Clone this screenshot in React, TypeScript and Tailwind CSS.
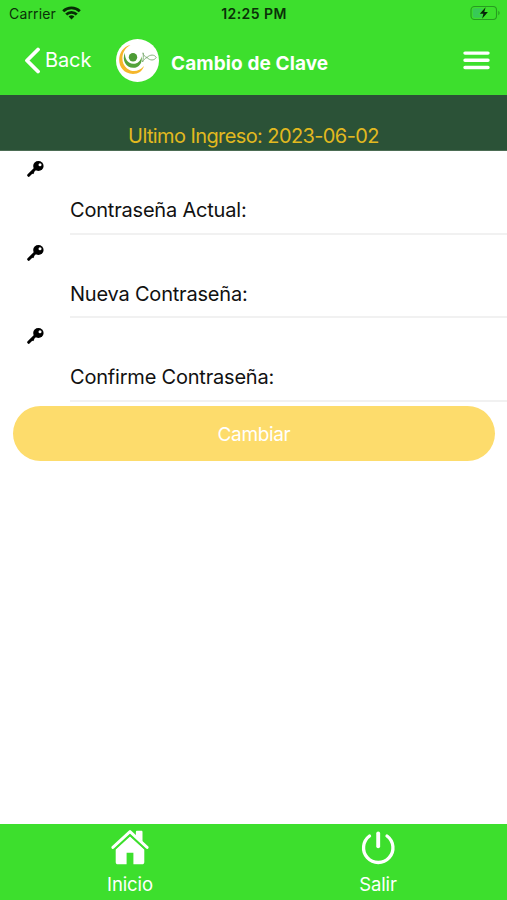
const fields = [
  { id: 'actual', label: 'Contraseña Actual:' },
  { id: 'nueva', label: 'Nueva Contraseña:' },
  { id: 'confirme', label: 'Confirme Contraseña:' },
];

export default function App() {
  return (
    <div className="flex h-[900px] w-[507px] flex-col overflow-hidden bg-white font-['Inter',sans-serif]">
      <header className="h-[95px] shrink-0 bg-[#3ddf2d]">
        <StatusBar />
        <NavBar />
      </header>

      <div className="flex h-[56px] shrink-0 items-end justify-center border-b border-[#4b6c54] bg-[#2b5237] pb-[2px]">
        <p className="text-[20px] leading-6 tracking-[-0.6px] text-[#e2b91f]">Ultimo Ingreso: 2023-06-02</p>
      </div>

      <main className="flex-1 pt-[0.4px]">
        {fields.map((field) => (
          <PasswordField key={field.id} label={field.label} />
        ))}
        <button className="mx-[13px] mt-[4.6px] flex h-[55px] w-[482px] items-center justify-center rounded-full bg-[#fddc6c] pt-[2px] text-[19px] tracking-[-0.35px] text-white">
          Cambiar
        </button>
      </main>

      <footer className="flex h-[76px] shrink-0 bg-[#3ddf2d] pl-[6px] text-white">
        <TabItem label="Inicio">
          <HomeIcon />
        </TabItem>
        <TabItem label="Salir">
          <PowerIcon />
        </TabItem>
      </footer>
    </div>
  );
}

function StatusBar() {
  return (
    <div className="grid h-[27px] grid-cols-3 items-center pr-[6px] pl-[9px] text-[#0a3008]">
      <div className="flex items-center gap-[6px]">
        <span className="text-[14px] tracking-[0.15px]">Carrier</span>
        <svg className="mb-[2px] h-[14px] w-[19px]" viewBox="0 0 19 14" fill="none" stroke="#072c05" strokeWidth="2.8">
          <path d="M1.2 5.2a12 12 0 0 1 16.6 0" />
          <path d="M4.2 8.6a7.6 7.6 0 0 1 10.6 0" />
          <path d="M9.5 13.5 6.6 10.6a4.2 4.2 0 0 1 5.8 0z" fill="#072c05" stroke="none" />
        </svg>
      </div>
      <span className="pr-[2px] text-center text-[14px] font-semibold tracking-[0.45px] whitespace-nowrap">12:25 PM</span>
      <svg className="mb-px h-[16px] w-[31px] justify-self-end" viewBox="0 0 31 16" fill="none">
        <rect x="1" y="1.5" width="25.5" height="13" rx="3.5" stroke="#279c20" strokeWidth="1.1" />
        <rect x="2.8" y="3.3" width="10" height="9.4" rx="1.8" fill="#38c957" />
        <path d="M28.3 5.8v4.4c1.8-.8 1.8-3.6 0-4.4z" fill="#279c20" />
        <path d="M15.6 2.2 9.8 8.7h3.6l-1.3 5 5.8-6.6h-3.6z" fill="#06230a" stroke="#3ddf2d" strokeWidth="1.6" paintOrder="stroke" />
      </svg>
    </div>
  );
}

function NavBar() {
  return (
    <div className="flex h-[66px] items-center pr-[17px] pl-[24px] text-white">
      <button className="flex w-[92px] items-center gap-[5px]">
        <svg className="h-[27px] w-[16px]" viewBox="0 0 16 27" fill="none" stroke="currentColor" strokeWidth="3.8" strokeLinecap="round" strokeLinejoin="round">
          <path d="M14 2.5 3 13.5l11 11" />
        </svg>
        <span className="text-[20px] tracking-[-0.1px]">Back</span>
      </button>
      <Logo />
      <h1 className="mt-[8px] ml-[12px] flex-1 text-[19px] font-bold tracking-[0.1px] whitespace-nowrap">Cambio de Clave</h1>
      <svg className="h-[19px] w-[27px]" viewBox="0 0 27 19" stroke="currentColor" strokeWidth="3.4" strokeLinecap="round">
        <path d="M2 2.1h23M2 9.3h23M2 16.5h23" />
      </svg>
    </div>
  );
}

function Logo() {
  return (
    <svg className="size-[43px] shrink-0" viewBox="0 0 43 43" fill="none">
      <circle cx="21.5" cy="21.5" r="21.5" fill="#fff" />
      <path d="M14.5 6C-1 9.500-1 34.500 17 35c5.500 0 9.500-3 11-8C23 33 16 33.500 11 29.500 3.800 23.800 5 10.800 14.500 6z" fill="#f5b62b" />
      <path d="M9 13.800C5.500 21 10 28.800 17.200 28.800c5.800 0 9.600-4.800 8.300-11.600-.7 5-4.200 7.800-8.300 7.600-5.400-.3-8.600-5-8.200-11z" fill="#54a33b" />
      <circle cx="17" cy="18.300" r="4.200" fill="#4d9b35" />
      <path d="M27 13.800c.6 2.700 1.600 3.800 4 4.700 3-3.200 7.600-3.200 9.200 0-2 3.300-6.200 3.300-9.200 0-2 1-3.500 2.300-4.500 4.500 1-3.500 1-6 .5-9.200z" stroke="#79a96f" strokeWidth=".9" />
    </svg>
  );
}

function PasswordField({ label }: { label: string }) {
  return (
    <div className="flex h-[83.5px]">
      <div className="w-[70px] shrink-0 pt-[9px] pl-[27px]">
        <svg className="size-[17px]" viewBox="0 0 17 17">
          <path d="M1.700 15.300 9 8" stroke="#000" strokeWidth="3" strokeLinecap="round" />
          <path d="m4.800 11.700 1.900 1.700" stroke="#000" strokeWidth="2" />
          <ellipse cx="11.400" cy="6" rx="5.200" ry="4.900" fill="#000" />
          <circle cx="13" cy="4.700" r="1.500" fill="#fff" />
        </svg>
      </div>
      <label className="flex-1 border-b-2 border-[#f1f1f1] pt-[47px] text-[20px] leading-6 tracking-[-0.2px] text-[#111]">
        {label}
      </label>
    </div>
  );
}

function TabItem({ label, children }: { label: string; children: React.ReactNode }) {
  return (
    <button className="flex w-[248px] flex-col items-center pt-[5px]">
      {children}
      <span className="mt-[6px] text-[18.5px] leading-6 tracking-[-0.1px]">{label}</span>
    </button>
  );
}

function HomeIcon() {
  return (
    <svg className="h-[37px] w-[38px]" viewBox="0 0 38 37" fill="currentColor">
      <path d="M19 7.5 4.700 20.500V33c0 1.500.8 2.300 2.200 2.300h8.700V23.800h6.800v11.500h8.700c1.400 0 2.200-.8 2.200-2.300V20.500z" />
      <path d="M31.500 12.800V3.200c0-1-.4-1.400-1.300-1.400h-4c-.9 0-1.300.4-1.300 1.400v3.600z" />
      <path d="M1.900 18.400 19 2.600l17.100 15.800" fill="none" stroke="currentColor" strokeWidth="2.900" strokeLinecap="round" strokeLinejoin="round" />
      <path d="M3.600 20.300 19 6l15.400 14.300" fill="none" stroke="#3ddf2d" strokeWidth="1.100" />
    </svg>
  );
}

function PowerIcon() {
  return (
    <svg className="h-[37px] w-[38px]" viewBox="0 0 38 37" fill="none" stroke="currentColor" strokeLinecap="round">
      <path d="M10.500 7a14.700 14.700 0 1 0 17.500 0" strokeWidth="3.300" />
      <path d="M19.200 4.500v12.800" strokeWidth="3.900" />
    </svg>
  );
}
